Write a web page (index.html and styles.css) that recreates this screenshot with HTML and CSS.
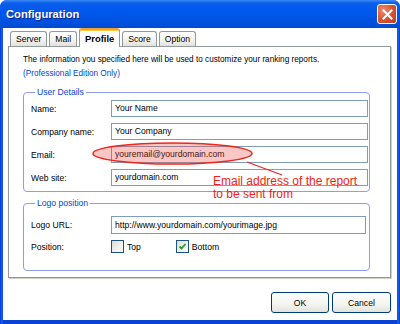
FILE: index.html
```html
<html lang="en">
<head>
    <meta charset="UTF-8">
    <title>Configuration</title>
    <link rel="stylesheet" href="styles.css">
</head>
<body>
<div class="window">
    <div class="titlebar">
        <span class="title">Configuration</span>
        <span class="close">
            <svg width="11" height="11" viewBox="0 0 11 11"><path d="M1.5 1.5 L9.5 9.5 M9.5 1.5 L1.5 9.5" stroke="#fff" stroke-width="2" stroke-linecap="square"/></svg>
        </span>
    </div>

    <div class="client">
        <div class="tabs">
            <span class="tab">Server</span>
            <span class="tab">Mail</span>
            <span class="tab active">Profile</span>
            <span class="tab">Score</span>
            <span class="tab">Option</span>
        </div>

        <div class="panel">
            <p class="intro">The information you specified here will be used to customize your ranking reports.<br>
                <span class="pro">(Professional Edition Only)</span></p>

            <fieldset class="group user">
                <legend>User Details</legend>
                <label>Name:</label><div class="field">Your Name</div>
                <label>Company name:</label><div class="field">Your Company</div>
                <label>Email:</label><div class="field">youremail@yourdomain.com</div>
                <label>Web site:</label><div class="field">yourdomain.com</div>
            </fieldset>

            <fieldset class="group logo">
                <legend>Logo position</legend>
                <label>Logo URL:</label><div class="field">http://www.yourdomain.com/yourimage.jpg</div>
                <label>Position:</label>
                <div class="checks">
                    <span class="check"><span class="box"></span>Top</span>
                    <span class="check"><span class="box checked"><svg width="9" height="9" viewBox="0 0 9 9"><path d="M1.5 4.5 L3.5 6.5 L7.5 2" fill="none" stroke="#21a121" stroke-width="1.8"/></svg></span>Bottom</span>
                </div>
            </fieldset>
        </div>

        <div class="footer">
            <button class="btn ok">OK</button>
            <button class="btn cancel">Cancel</button>
        </div>
    </div>

    <!-- red note drawn over the email field -->
    <svg class="callout" width="400" height="324" viewBox="0 0 400 324">
        <ellipse cx="172.5" cy="153.5" rx="79.5" ry="10.5" fill="rgba(238,70,60,0.3)" stroke="#f0261e" stroke-width="1.5"/>
        <line x1="247" y1="162" x2="282" y2="175" stroke="#f0261e" stroke-width="1.2"/>
    </svg>
    <div class="note">Email address of the report<br>to be sent from</div>
</div>
</body>
</html>
```

FILE: styles.css
```css
body {
    margin: 0;
    padding: 0;
    font-family: "Liberation Sans", Arial, sans-serif;
    font-size: 8.6px;
    color: #000;
}

.window {
    position: relative;
    width: 400px;
    height: 324px;
    box-sizing: border-box;
    display: flex;
    flex-direction: column;
    background: linear-gradient(90deg, #0831d9 0, #166aee 2px, #0843d6 3px, #0843d6 397px, #166aee 398px, #0831d9 400px);
    border-radius: 7px 7px 0 0;
    overflow: hidden;
}

.titlebar {
    height: 28px;
    flex: none;
    display: flex;
    align-items: center;
    padding: 0 3px 0 6px;
    background: linear-gradient(#3d8af7 0, #0a5fe9 3px, #0058ee 10px, #0054e3 20px, #004bd0 28px);
}

.title {
    flex: 1;
    color: #fff;
    font-size: 11.2px;
    font-weight: bold;
    text-shadow: 1px 1px #0a1e8a;
}

.close {
    width: 18px;
    height: 18px;
    border: 1px solid #fff;
    border-radius: 3px;
    display: flex;
    align-items: center;
    justify-content: center;
    background: radial-gradient(circle at 30% 30%, #ee8a6c, #d9502d 55%, #c03a18);
}

.client {
    flex: 1;
    margin: 0 3px 4px;
    background: #fff;
    padding: 0 6px 0 5px;
    display: flex;
    flex-direction: column;
}

.tabs {
    height: 18px;
    display: flex;
    align-items: flex-end;
    gap: 2px;
    padding-left: 2px;
    position: relative;
    z-index: 1;
}

.tab {
    height: 15px;
    box-sizing: border-box;
    padding: 2px 5px 0;
    border: 1px solid #919b9c;
    border-bottom: none;
    border-radius: 3px 3px 0 0;
    background: linear-gradient(#fff, #f3f2ee 60%, #e3e1d8);
    font-size: 8.6px;
}

.tab.active {
    height: 19px;
    margin-bottom: -1px;
    padding-top: 3px;
    border-top: 2px solid #f3a03a;
    box-shadow: inset 0 1px 0 #ffc83c;
    background: #fff;
    font-weight: bold;
    font-size: 9.4px;
}

.panel {
    height: 232px;
    box-sizing: border-box;
    border: 1px solid #919b9c;
    box-shadow: 1px 1px 0 #d0cebf;
    padding: 6px 20px 0 14px;
    background: #fff;
}

.intro {
    margin: 0;
    line-height: 14px;
    font-size: 8.2px;
}

.pro {
    color: #0046d5;
}

.group {
    margin: 5px 0 0;
    border: 1px solid #8e9bef;
    border-radius: 4px;
    display: grid;
    grid-template-columns: 80px 1fr;
    align-items: center;
}

.group legend {
    margin-left: 4px;
    padding: 0 2px;
    color: #0046d5;
    line-height: 12px;
}

.user {
    padding: 2px 1px 5px 7px;
    row-gap: 6px;
}

.logo {
    margin-top: 5px;
    padding: 7px 3px 17px 7px;
    row-gap: 6px;
}

.field {
    height: 17px;
    box-sizing: border-box;
    border: 1px solid #7f9db9;
    padding: 0 3px;
    line-height: 15px;
    background: #fff;
    white-space: nowrap;
    overflow: hidden;
}

.logo .field {
    height: 18px;
    line-height: 16px;
}

.checks {
    display: flex;
    gap: 35px;
}

.check {
    display: flex;
    align-items: center;
    gap: 3px;
}

.box {
    width: 11px;
    height: 11px;
    border: 1px solid #1c5180;
    background: linear-gradient(135deg, #dcdcd7, #fff);
    display: flex;
    align-items: center;
    justify-content: center;
}

.footer {
    display: flex;
    justify-content: flex-end;
    gap: 3px;
    padding-top: 14px;
}

.btn {
    height: 21px;
    border: 1px solid #003c74;
    border-radius: 3px;
    background: linear-gradient(#fff, #f4f4f0 60%, #e3e2da);
    font-family: "Liberation Sans", Arial, sans-serif;
    font-size: 8.6px;
    padding: 0;
}

.ok { width: 58px; }
.cancel { width: 59px; }

.callout {
    position: absolute;
    left: 0;
    top: 0;
    pointer-events: none;
}

.note {
    position: absolute;
    left: 213px;
    top: 175px;
    color: #f01e14;
    font-size: 12px;
    line-height: 13px;
}
```
